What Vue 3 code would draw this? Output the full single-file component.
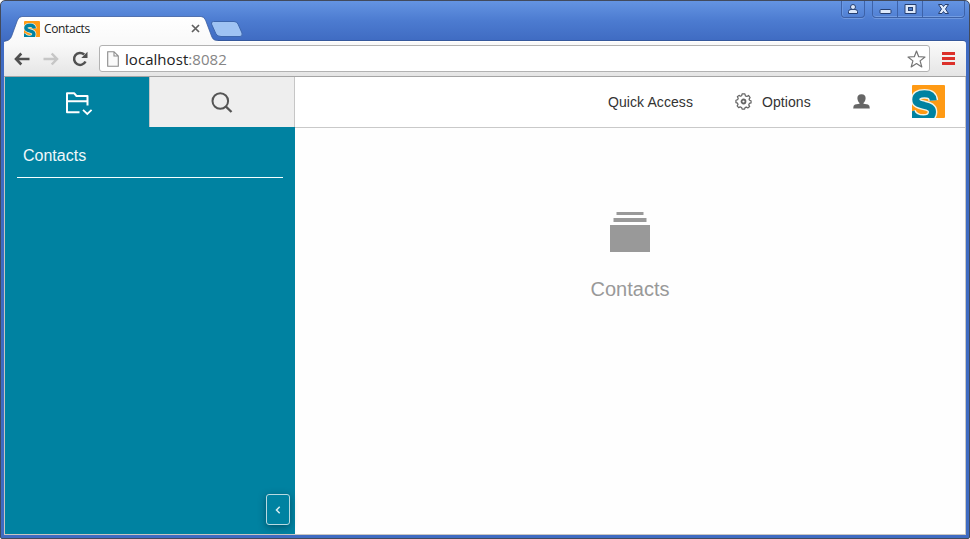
<script setup>
import { h } from 'vue'

const host = 'localhost'
const port = ':8082'

const curve = 'M21.300 15.500C20.800 10.500 18 8.800 12.500 8.800C6.500 8.800 3.800 11 3.800 14.500C3.800 18.500 7.500 19.300 12 20.300C17.500 21.500 20.500 22.800 20.500 27C20.500 31.500 17 34 11.500 34C4 34 .5 31 -1 26.500'

const BrandLogo = () =>
  h('svg', { viewBox: '0 0 33 33' }, [
    h('rect', { width: 33, height: 33, rx: 1, fill: '#ff9a14' }),
    h('path', { d: curve, fill: 'none', stroke: '#f4f3e6', 'stroke-width': 9.8 }),
    h('path', { d: curve, fill: 'none', stroke: '#0082a1', 'stroke-width': 7 })
  ])
</script>

<template>
  <div class="window">
    <header class="titlebar">
      <svg class="tab-shape" width="250" height="27" viewBox="0 0 250 27">
        <defs>
          <linearGradient id="tabFill" x1="0" y1="0" x2="0" y2="1">
            <stop offset="0" stop-color="#fff" />
            <stop offset="1" stop-color="#f9f9f9" />
          </linearGradient>
        </defs>
        <path d="M4 27V25.500C8 24.500 10 24 11.500 20.500L17.500 4Q19 .8 22 .5H201Q204 .8 205.500 4L211.500 20C213 23.500 214 24.500 218 24.500V27Z" fill="url(#tabFill)" />
        <path d="M4 25.500C8 24.500 10 24 11.500 20.500L17.500 4Q19 .5 22 .5H201Q204 .5 205.500 4L211.500 20C213 23.500 214 24.500 218 24.500" fill="none" stroke="#35589c" stroke-opacity=".75" />
        <path d="M213.500 5.500H234Q237 5.500 238 8L242 17Q243 20.500 240 20.500H221Q217.500 20.500 216 18L211.500 8Q211 5.500 213.500 5.500Z" fill="#9fc3f3" stroke="#3d66ad" />
      </svg>
      <div class="tab">
        <BrandLogo class="favicon" />
        <span class="tab-title">Contacts</span>
        <svg class="tab-close" width="9" height="9" viewBox="0 0 9 9"><path d="M1 1L8 8M8 1L1 8" stroke="#606060" stroke-width="1.700" /></svg>
      </div>
      <div class="controls">
        <div class="control profile">
          <svg width="12" height="12" viewBox="0 0 12 12"><path d="M1.500 10.500V8.500Q1.500 6.500 4 6.500H8Q10.500 6.500 10.500 8.500V10.500Z" fill="#dce8fa" stroke="#263f70" /><circle cx="6" cy="4" r="2.500" fill="#dce8fa" stroke="#263f70" /></svg>
        </div>
        <div class="group">
          <div class="control minimize">
            <svg width="13" height="12" viewBox="0 0 13 12"><rect x="1" y="6.500" width="11" height="4" rx="1" fill="#dce8fa" stroke="#263f70" /></svg>
          </div>
          <div class="control maximize">
            <svg width="13" height="12" viewBox="0 0 13 12"><path d="M1 1.500H12V10.500H1Z" fill="#dce8fa" stroke="#263f70" /><rect x="4.500" y="4.500" width="4" height="3" fill="#4d7ccb" stroke="#263f70" /></svg>
          </div>
          <div class="control close">
            <svg width="13" height="12" viewBox="0 0 13 12"><path d="M1.500 1.500H5L6.500 3.500L8 1.500H11.500L8.500 6L11.500 10.500H8L6.500 8.500L5 10.500H1.500L4.500 6Z" fill="#dce8fa" stroke="#263f70" stroke-linejoin="round" /></svg>
          </div>
        </div>
      </div>
    </header>

    <div class="toolbar">
      <svg class="nav" width="16" height="14" viewBox="0 0 16 14"><path d="M7.300 1.500L2 7L7.300 12.500M2 7H15.500" fill="none" stroke="#505050" stroke-width="2.600" /></svg>
      <svg class="nav forward" width="16" height="14" viewBox="0 0 16 14"><path d="M8.700 1.500L14 7L8.700 12.500M14 7H.5" fill="none" stroke="#c6c6c6" stroke-width="2.500" /></svg>
      <svg class="nav reload" width="17" height="16" viewBox="0 0 17 16"><path d="M13.500 10.500A6 6 0 1 1 12.200 3.500" fill="none" stroke="#505050" stroke-width="2.500" /><path d="M15.500 .8V7H9.300Z" fill="#505050" /></svg>
      <div class="address">
        <svg width="12" height="16" viewBox="0 0 12 16"><path d="M.7 .7H7L11.300 5V15.300H.7ZM7 .7V5H11.300" fill="#fafafa" stroke="#8c8c8c" stroke-width="1.100" /></svg>
        <span class="url">{{ host }}<span class="port">{{ port }}</span></span>
        <svg class="star" width="19" height="18" viewBox="0 0 19 18"><path d="M9.500 1L11.700 6.700L18 7L13.100 10.900L14.800 16.900L9.500 13.500L4.200 16.900L5.900 10.900L1 7L7.300 6.700Z" fill="#fff" stroke="#757575" stroke-width="1.200" stroke-linejoin="round" /></svg>
      </div>
      <div class="menu"><i></i><i></i><i></i></div>
    </div>

    <main class="page">
      <aside class="sidebar">
        <div class="views">
          <div class="view active">
            <svg width="28" height="24" viewBox="0 0 28 24"><path d="M14.500 20.200H2V1.300H9.300L11.500 4H22.500V13.500M2 9.300H22.500" fill="none" stroke="#fff" stroke-width="2" stroke-linejoin="round" /><path d="M18 17.800L22.300 22L26.600 17.800" fill="none" stroke="#fff" stroke-width="1.800" /></svg>
          </div>
          <div class="view search">
            <svg width="22" height="21" viewBox="0 0 22 21"><circle cx="9.300" cy="9" r="7.800" fill="none" stroke="#555" stroke-width="2" /><path d="M14.700 14.400L20.500 20" stroke="#555" stroke-width="2.300" /></svg>
          </div>
        </div>
        <h1 class="outline-title">Contacts</h1>
        <button class="collapse" aria-label="Collapse">
          <svg width="6" height="8" viewBox="0 0 6 8"><path d="M4.700 .8L1.500 4L4.700 7.200" fill="none" stroke="#d9edf1" stroke-width="1.500" /></svg>
        </button>
      </aside>
      <section class="desktop">
        <nav class="header">
          <span class="quick">Quick Access</span>
          <svg class="gear" width="17" height="17" viewBox="0 0 18 18"><path d="M7.500 1H10.500L11 3L12.600 3.700L14.300 2.600L16 5L14.900 6.500L15.400 7.700L17 8.200V10.500L15.200 11L14.500 12.600L15.500 14.200L13.500 15.800L12 14.900L10.700 15.400L10.200 17H7.500L7 15.300L5.400 14.700L3.900 15.600L2.300 13.600L3.200 12.200L2.700 10.800L1 10.200V7.700L2.800 7.100L3.400 5.600L2.500 4L4.300 2.500L5.800 3.400L7.100 2.900Z" fill="none" stroke="#666" stroke-width="1.300" stroke-linejoin="round" /><circle cx="9" cy="9" r="2.100" fill="none" stroke="#666" stroke-width="1.900" /></svg>
          <span class="options">Options</span>
          <svg class="person" width="17" height="15" viewBox="0 0 17 15"><path d="M8.500 .3C11.500 .3 12.800 2.200 12.600 4.500C12.400 6.700 11.500 8.200 10.500 8.900V9.800L15 10.600Q16.800 11.200 16.800 14.500H.2Q.2 11.200 2 10.600L6.500 9.800V8.900C5.500 8.200 4.600 6.700 4.400 4.500C4.200 2.200 5.500 .3 8.500 .3Z" fill="#666" /></svg>
          <BrandLogo class="logo" />
        </nav>
        <div class="overview">
          <svg width="40" height="40" viewBox="0 0 40 40"><path d="M6.500 0H33.500V3H6.500ZM3.500 6H36.500V10H3.500ZM0 13H40V40H0Z" fill="#999" /></svg>
          <h2>Contacts</h2>
        </div>
      </section>
    </main>
  </div>
</template>

<style>
body { margin: 0; background: #fff; overflow: hidden; }
</style>

<style scoped>
* { box-sizing: border-box; }
svg { display: block; flex: none; }
.window {
  position: relative;
  width: 970px;
  height: 539px;
  display: flex;
  flex-direction: column;
  padding: 0 3px 3px;
  border: 1px solid #424a5c;
  border-radius: 5px 5px 2px 2px;
  background: linear-gradient(#6494e2 0, #4c7bd0 20px, #3f6bc2 40px, #3f6bc2 100%);
  font-family: "Liberation Sans", Arial, sans-serif;
}
.titlebar { height: 40px; flex: none; display: flex; justify-content: space-between; }
.tab-shape { position: absolute; left: -1px; top: 15px; z-index: 1; }
.tab { position: relative; z-index: 2; display: flex; align-items: center; width: 196px; height: 17px; margin: 19px 0 0 20px; }
.favicon { width: 16px; height: 16px; }
.tab-title { margin-left: 4px; font: 12px/16px "Open Sans", sans-serif; letter-spacing: -.38px; color: #222; }
.tab-close { margin-left: auto; margin-right: 20px; }
.controls { display: flex; height: 17px; padding-right: 1px; }
.group { display: flex; margin-left: 7px; border: 1px solid #3d62a8; border-top: 0; border-radius: 0 0 4px 4px; box-shadow: inset 0 -1px #739de2, 0 1px #6f98de; }
.control { display: flex; align-items: center; justify-content: center; height: 16px; }
.profile { width: 24px; height: 17px; border: 1px solid #3d62a8; border-top: 0; border-radius: 0 0 4px 4px; box-shadow: inset 1px 0 #6b98e2, 0 1px #6f98de; }
.minimize { width: 24px; }
.maximize { width: 26px; border-left: 1px solid #3d62a8; border-right: 1px solid #3d62a8; }
.close { width: 41px; }
.toolbar {
  height: 36px;
  flex: none;
  display: flex;
  align-items: center;
  padding: 0 10px 1px 11px;
  border-top: 1px solid #fff;
  border-bottom: 1px solid #a5a5a5;
  border-radius: 3px 3px 0 0;
  background: linear-gradient(#fafafa, #e5e5e5);
  box-shadow: 0 -1px #35589c;
}
.nav { margin-left: -1px; }
.forward { margin-left: 13px; }
.reload { margin-left: 13px; }
.address { display: flex; align-items: center; width: 831px; height: 27px; margin-left: 10px; padding: 0 3px 0 7px; background: #fff; border: 1px solid #b2b2b2; border-radius: 3px; }
.url { margin-left: 6px; font: 15px/24px "Open Sans", sans-serif; letter-spacing: .05px; color: #222; }
.port { color: #858585; }
.star { margin-left: auto; }
.menu { display: grid; gap: 2px; margin-left: 12px; }
.menu i { width: 13px; height: 3px; background: #dc302a; }
.page { flex: 1; min-height: 0; display: flex; border: 1px solid #c9c6c1; border-top: 0; background: #fefefe; }
.sidebar { width: 290px; display: flex; flex-direction: column; background: #0082a1; }
.views { display: flex; height: 50px; flex: none; }
.view { display: flex; align-items: center; justify-content: center; }
.active { width: 144px; padding: 3px 0 0 4px; }
.search { width: 146px; background: #eee; border: solid #c6c6c6; border-width: 0 1px; }
.outline-title { height: 51px; margin: 0 12px; padding: 0 6px; border-bottom: 1px solid #f5ffff; color: #f0f8fa; font-size: 16px; font-weight: 400; line-height: 57px; }
.collapse { display: flex; align-items: center; justify-content: center; width: 24px; height: 31px; margin: auto 5px 9px auto; padding: 0; background: #0082a1; border: 1px solid #b8dae1; border-radius: 3px; box-shadow: 0 2px 7px rgba(0, 40, 55, .5); }
.desktop { flex: 1; }
.header { display: flex; align-items: center; height: 51px; padding: 0 20px 1px 313px; border-bottom: 1px solid #c9c9c9; background: #fff; font-size: 14px; color: #333; }
.quick { letter-spacing: .08px; padding-top: 1px; }
.gear { margin-left: 42px; }
.options { margin-left: 10px; padding-top: 1px; letter-spacing: .08px; }
.person { margin-left: 42px; }
.logo { width: 33px; height: 33px; margin-left: auto; }
.overview { display: flex; flex-direction: column; align-items: center; padding-top: 84px; color: #999; }
.overview h2 { margin: 24px 0 0; font-size: 20px; font-weight: 400; line-height: 26px; }
</style>
